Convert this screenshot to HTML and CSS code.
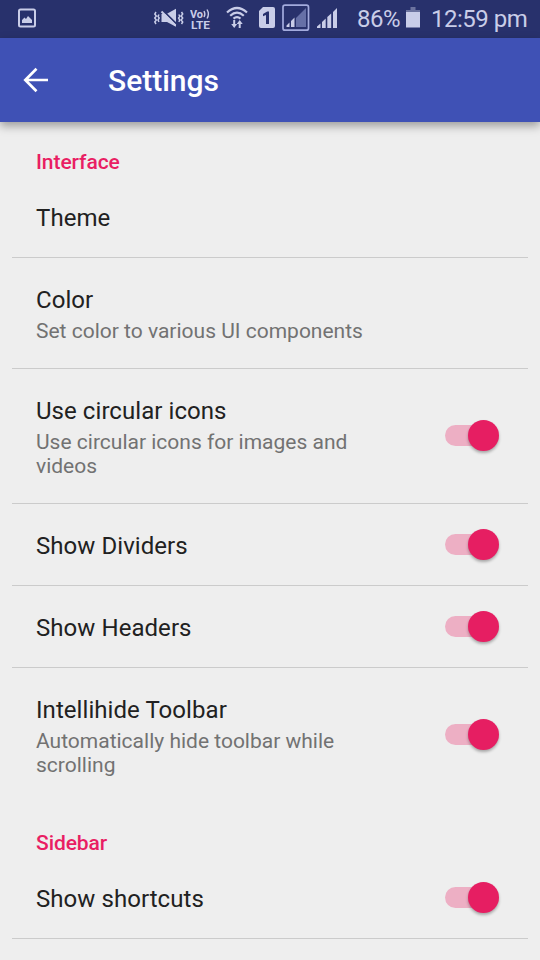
FILE: index.html
```html
<!DOCTYPE html>
<html lang="en">
<head>
<meta charset="utf-8">
<title>Settings</title>
<link rel="stylesheet" href="styles.css">
</head>
<body>
<div class="status">
  <svg class="picture" width="20" height="22" viewBox="0 0 20 22"><rect x="2" y="2.500" width="16" height="17" rx="1.500" fill="none" stroke="currentColor" stroke-width="2"/><path d="M5 16v-3l2.500-2.500L9 12l2-3 2 2 2 2v3z" fill="currentColor"/></svg>
  <svg class="mute" width="30" height="22" viewBox="0 0 30 22"><g fill="none" stroke="currentColor" stroke-width="1.500"><path d="M2 4l-1.200 2L2.300 8 .8 10l1.500 2-1.500 2L2 16M5 6.500L4 8.300l1.200 1.800L4 12l1 1.800"/><path d="M27.500 4l1.200 2-1.500 2 1.500 2-1.500 2 1.500 2-1.200 2M24.800 6.500l1 1.800-1.200 1.800 1.200 1.900-1 1.800"/></g><path d="M7.500 6h5L22 .8v18L13 14H7.500z" fill="currentColor"/><path d="M8.800 2.300L22.500 15.800" stroke="#28316c" stroke-width="1.800"/><path d="M7.500 3.500L21.500 17.500" stroke="currentColor" stroke-width="2"/></svg>
  <svg class="volte" width="22" height="26" viewBox="0 0 22 26"><text x="0" y="11.500" textLength="13" lengthAdjust="spacingAndGlyphs">Vo</text><path d="M14 5q1.700 3 0 6M17 3.500q2.800 4.500 0 9" fill="none" stroke="currentColor" stroke-width="1.400"/><text x="1" y="22.800" textLength="19" lengthAdjust="spacingAndGlyphs">LTE</text></svg>
  <svg class="wifi" width="22" height="24" viewBox="0 0 22 24"><g fill="none" stroke="currentColor" stroke-width="2.200"><path d="M1 7.500Q11-1.500 21 7.500M4.200 10.800Q11 4.500 17.800 10.800M7.500 13.700Q11 10.700 14.500 13.700"/></g><path d="M7.200 15h2v4h2l-3 4-3-4h2zM12.700 23h2v-4h2l-3-4-3 4h2z" fill="currentColor"/></svg>
  <svg class="sim" width="16" height="22" viewBox="0 0 16 22"><path d="M4 0h10q2 0 2 2v17q0 2-2 2H2q-2 0-2-2V4z" fill="currentColor"/><path d="M7 17V8l-3 1.200V7l4.200-2.500H10V17z" fill="#28316c"/></svg>
  <svg class="boxed" width="28" height="28" viewBox="0 0 28 28"><rect x="1" y="1.200" width="25.500" height="25" rx="2" fill="none" stroke="#a3abdd" stroke-width="1.700"/><path d="M14 23V14L24 4v19z" fill="#6670a7"/><path d="M4.500 23v-1.500l3-3V23zM9 23v-6l3.500-3.500V23z" fill="currentColor"/></svg>
  <svg class="signal" width="21" height="22" viewBox="0 0 21 22"><path d="M0 20v-1.500L3.500 15.500V20zM5 20v-6l3.700-3.500V20zM10.300 20V9l3.900-3.500V20zM16 20V4l4-4v20z" fill="currentColor"/></svg>
  <span class="percent">86%</span>
  <svg class="battery" width="14" height="22" viewBox="0 0 14 22"><path d="M4.500 0h5v3H14v4H0V3h4.500z" fill="#6c739f"/><path d="M0 5h14v15.500H0z" fill="currentColor"/></svg>
  <span class="clock">12:59 pm</span>
</div>
<header class="toolbar">
  <svg width="26" height="26" viewBox="0 0 26 26"><path d="M25 13H3M13.500 1.800L2.300 13l11.200 11.200" fill="none" stroke="#fff" stroke-width="2.700"/></svg>
  <h1>Settings</h1>
</header>
<main>
  <h2>Interface</h2>
  <section class="row"><div><h3>Theme</h3></div></section>
  <section class="row"><div><h3>Color</h3><p>Set color to various UI components</p></div></section>
  <section class="row tall"><div><h3>Use circular icons</h3><p>Use circular icons for images and<br>videos</p></div><span class="switch"></span></section>
  <section class="row"><div><h3>Show Dividers</h3></div><span class="switch"></span></section>
  <section class="row"><div><h3>Show Headers</h3></div><span class="switch"></span></section>
  <section class="row tall last"><div><h3>Intellihide Toolbar</h3><p>Automatically hide toolbar while<br>scrolling</p></div><span class="switch"></span></section>
  <h2>Sidebar</h2>
  <section class="row"><div><h3>Show shortcuts</h3></div><span class="switch"></span></section>
</main>
</body>
</html>
```
FILE: styles.css
```css
* { box-sizing: border-box; }
body { margin: 0; height: 960px; overflow: hidden; background: #eee; font-family: Roboto, sans-serif; }
h1, h2, h3, p { margin: 0; }
svg { display: block; flex: none; }

.status { height: 38px; display: flex; align-items: flex-start; background: #28316c; color: #c9cde8; white-space: nowrap; }
.picture { margin: 7px 0 0 17px; }
.mute { margin: 8px 0 0 117px; }
.volte { margin: 6px 0 0 6px; fill: currentColor; font-size: 11px; font-weight: 700; }
.wifi { margin: 5px 0 0 14px; }
.sim { margin: 7px 0 0 11px; }
.boxed { margin: 4px 0 0 7px; }
.signal { margin: 8px 0 0 7px; }
.percent { width: 48px; margin: 5px 0 0 19px; font-size: 24px; line-height: 28px; letter-spacing: -.5px; }
.battery { margin: 7px 0 0 1px; }
.clock { margin: 5px 0 0 11px; font-size: 24px; line-height: 28px; letter-spacing: -.5px; }

.toolbar { height: 84px; display: flex; align-items: center; padding-left: 23px; background: #3f51b5; color: #fff; box-shadow: 0 4px 9px rgba(0, 0, 0, .35); }
.toolbar h1 { margin: 2px 0 0 59px; font-size: 30px; line-height: 36px; font-weight: 500; }

main { padding: 0 12px; }
h2 { height: 55px; padding: 29px 24px 0; color: #e91e63; font-size: 21px; line-height: 25px; font-weight: 500; letter-spacing: -.08px; }
h2:first-child { height: 54px; padding-top: 28px; }
.row { display: flex; align-items: center; justify-content: space-between; padding: 28px 29px 25px 24px; border-bottom: 1px solid #cbcbcb; }
.last { border-bottom: 0; }
h3 { color: #212121; font-size: 24px; line-height: 28px; font-weight: 400; letter-spacing: .06px; }
p { padding-top: 5px; color: #727272; font-size: 21px; line-height: 24px; }

.switch { width: 54px; height: 21px; margin: -3px 0 0; display: flex; align-items: center; justify-content: flex-end; background: linear-gradient(#edafc4, #edafc4) left / 45px 21px no-repeat; border-radius: 10.500px; }
.tall .switch { margin-top: -5px; }
.switch::after { content: ""; flex: none; width: 31px; height: 31px; border-radius: 50%; background: #e61e62; box-shadow: 0 2px 3px rgba(0, 0, 0, .3); }
```
